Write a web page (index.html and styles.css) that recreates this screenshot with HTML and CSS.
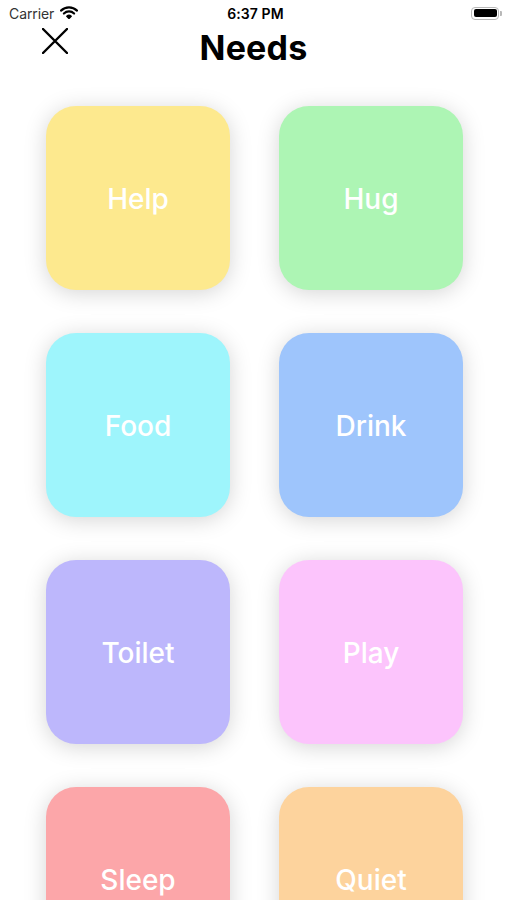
FILE: index.html
```html
<!DOCTYPE html>
<html lang="en">
<head>
<meta charset="utf-8">
<title>Needs</title>
<link rel="stylesheet" href="styles.css">
</head>
<body>
<div class="screen">
  <div class="status">
    <div class="status-left">
      <span class="carrier">Carrier</span>
      <svg class="wifi" width="18" height="13" viewBox="0 0 18 13">
        <path d="M1 4.6 A11.5 11.5 0 0 1 17 4.6" fill="none" stroke="#000" stroke-width="2.2" stroke-linecap="round"/>
        <path d="M3.9 7.5 A7.3 7.3 0 0 1 14.1 7.5" fill="none" stroke="#000" stroke-width="2.2" stroke-linecap="round"/>
        <path d="M6.8 10.2 A3.2 3.2 0 0 1 11.2 10.2 L9 12.5 Z" fill="#000" stroke="#000" stroke-width="1.4" stroke-linejoin="round"/>
      </svg>
    </div>
    <span class="time">6:37 PM</span>
    <div class="status-right">
      <span class="battery"><span class="battery-fill"></span></span>
      <span class="battery-tip"></span>
    </div>
  </div>
  <header class="header">
    <button class="close" aria-label="Close">
      <svg width="26" height="26" viewBox="0 0 26 26">
        <path d="M1 1 L25 25 M25 1 L1 25" stroke="#000" stroke-width="2.4" stroke-linecap="round"/>
      </svg>
    </button>
    <h1 class="title">Needs</h1>
  </header>
  <main class="grid">
    <div class="tile help">Help</div>
    <div class="tile hug">Hug</div>
    <div class="tile food">Food</div>
    <div class="tile drink">Drink</div>
    <div class="tile toilet">Toilet</div>
    <div class="tile play">Play</div>
    <div class="tile sleep">Sleep</div>
    <div class="tile quiet">Quiet</div>
  </main>
</div>
</body>
</html>
```
FILE: styles.css
```css
* { box-sizing: border-box; }
html, body {
  margin: 0;
  padding: 0;
  background: #fff;
}
body {
  font-family: Inter, "Liberation Sans", Arial, sans-serif;
  color: #000;
}
.screen {
  width: 507px;
  height: 900px;
  overflow: hidden;
}
.status {
  height: 26px;
  display: grid;
  grid-template-columns: 1fr auto 1fr;
  align-items: center;
  padding: 0 5px 0 9px;
}
.status-left {
  display: flex;
  align-items: center;
  gap: 6px;
}
.carrier {
  font-size: 14px;
  color: #333;
  letter-spacing: -0.1px;
}
.wifi { margin-top: -1px; }
.time {
  font-size: 14px;
  font-weight: 600;
  letter-spacing: 0.1px;
}
.status-right {
  display: flex;
  justify-content: flex-end;
  align-items: center;
}
.battery {
  width: 28px;
  height: 13px;
  border: 1.5px solid #b8b8b8;
  border-radius: 4px;
  padding: 1.5px;
  display: flex;
}
.battery-fill {
  flex: 1;
  background: #000;
  border-radius: 2px;
}
.battery-tip {
  width: 2px;
  height: 5px;
  background: #b8b8b8;
  border-radius: 0 1px 1px 0;
  margin-left: 1px;
}
.header {
  display: grid;
  grid-template-columns: 1fr auto 1fr;
  align-items: start;
  padding-top: 2px;
  height: 80px;
}
.close {
  grid-column: 1;
  grid-row: 1;
  justify-self: start;
  margin: 0 0 0 42px;
  padding: 0;
  border: 0;
  background: none;
  width: 26px;
  height: 26px;
  display: block;
}
.close svg { display: block; }
.title {
  grid-column: 2;
  grid-row: 1;
  margin: 0;
  font-size: 34px;
  font-weight: 700;
  line-height: 40px;
  letter-spacing: 0.2px;
}
.grid {
  display: grid;
  grid-template-columns: 184px 184px;
  grid-auto-rows: 184px;
  column-gap: 49px;
  row-gap: 43px;
  padding-left: 46px;
}
.tile {
  border-radius: 30px;
  display: flex;
  align-items: center;
  justify-content: center;
  color: #fff;
  font-size: 28px;
  font-weight: 500;
  padding-top: 2px;
  box-shadow: 0 3px 22px rgba(0, 0, 0, 0.17);
}
.help { background: #fde98e; }
.hug { background: #adf5b4; }
.food { background: #9ef5fc; }
.drink { background: #9ec5fc; }
.toilet { background: #bdb7fc; }
.play { background: #fcc4fc; }
.sleep { background: #fca6a9; }
.quiet { background: #fdd39d; }
```
